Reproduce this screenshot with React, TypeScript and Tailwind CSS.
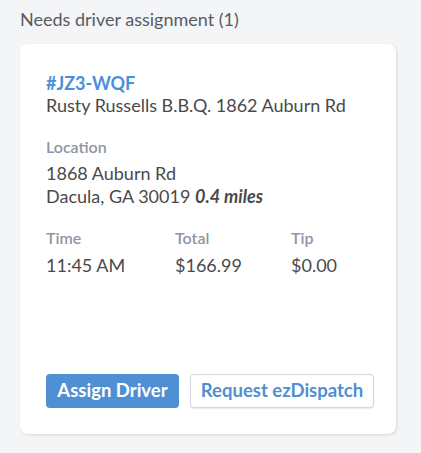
export default function App() {
  return (
    <div
      className="min-h-[453px] w-[421px] bg-[#f4f5f7] px-5 pt-[7px] pb-5"
      style={{ fontFamily: 'Lato, "Open Sans", sans-serif' }}
    >
      <h2 className="text-[18px] leading-6 text-[#575c63]">Needs driver assignment (1)</h2>

      <div className="mt-[13px] w-[376px] rounded-lg bg-white px-[26px] pt-[28px] pb-[26px] shadow-[1px_1px_3px_rgba(0,0,0,0.12)]">
        <div className="text-[18px] font-bold leading-[22px] text-[#4a90d9]">#JZ3-WQF</div>
        <div className="text-[18px] leading-[22px] text-[#4a4a4a]">Rusty Russells B.B.Q. 1862 Auburn Rd</div>

        <div className="mt-[21px] text-[16px] font-semibold leading-5 text-[#8d96a5]">Location</div>
        <div className="mt-[5px] text-[18px] leading-[23px] text-[#4a4a4a]">
          <div>1868 Auburn Rd</div>
          <div>
            Dacula, GA 30019 <span className="font-bold italic">0.4 miles</span>
          </div>
        </div>

        <div className="mt-5 grid grid-cols-[129px_116px_1fr]">
          <div className="text-[16px] font-semibold leading-5 text-[#8d96a5]">Time</div>
          <div className="text-[16px] font-semibold leading-5 text-[#8d96a5]">Total</div>
          <div className="text-[16px] font-semibold leading-5 text-[#8d96a5]">Tip</div>
          <div className="mt-1.5 text-[18px] leading-[22px] text-[#4a4a4a]">11:45 AM</div>
          <div className="mt-1.5 text-[18px] leading-[22px] text-[#4a4a4a]">$166.99</div>
          <div className="mt-1.5 text-[18px] leading-[22px] text-[#4a4a4a]">$0.00</div>
        </div>

        <div className="mt-[98px] flex gap-[11px]">
          <button
            type="button"
            className="h-[34px] w-[133px] shrink-0 rounded-[4px] bg-[#4f8fd3] text-[18.5px] font-bold text-white"
          >
            Assign Driver
          </button>
          <button
            type="button"
            className="h-[34px] w-[184px] shrink-0 rounded-[4px] border border-[#d3d7dd] bg-white text-[18.5px] font-bold text-[#4f8fd3] shadow-[0_1px_1px_rgba(0,0,0,0.08)]"
          >
            Request ezDispatch
          </button>
        </div>
      </div>
    </div>
  );
}
